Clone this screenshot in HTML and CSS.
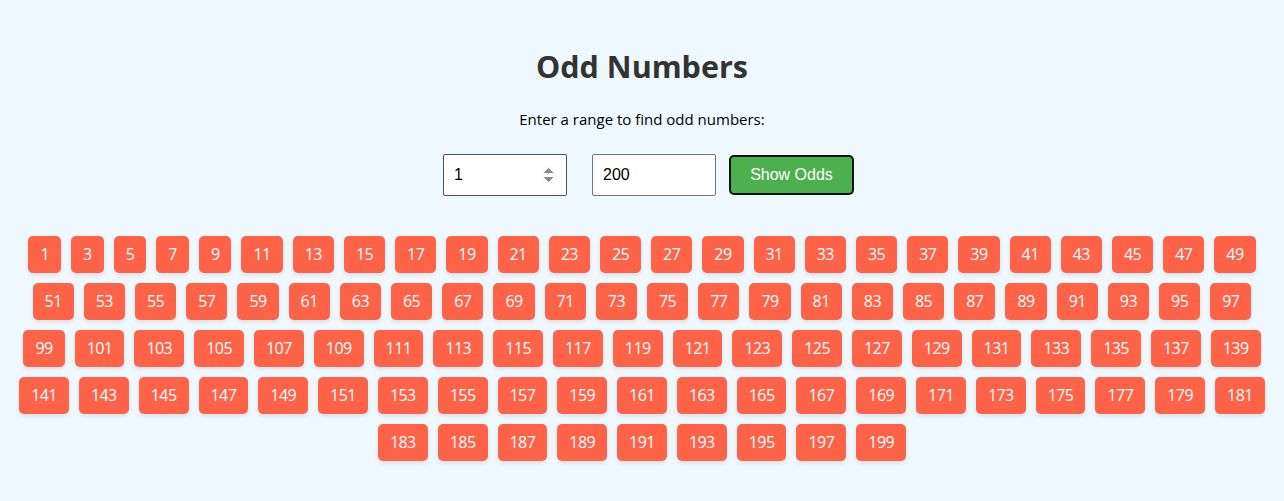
FILE: index.html
```html
<!DOCTYPE html>
<html lang="en">
<head>
<meta charset="utf-8">
<title>Odd Numbers</title>
<link rel="stylesheet" href="styles.css">
</head>
<body>
<main class="page">
  <h1 class="title">Odd Numbers</h1>
  <p class="subtitle">Enter a range to find odd numbers:</p>
  <div class="controls">
    <input class="field field-start" type="number" value="1">
    <input class="field field-end" type="number" value="200">
    <button class="btn" type="button">Show Odds</button>
  </div>
  <div class="numbers">
    <span class="num">1</span><span class="num">3</span><span class="num">5</span><span class="num">7</span><span class="num">9</span>
    <span class="num">11</span><span class="num">13</span><span class="num">15</span><span class="num">17</span><span class="num">19</span>
    <span class="num">21</span><span class="num">23</span><span class="num">25</span><span class="num">27</span><span class="num">29</span>
    <span class="num">31</span><span class="num">33</span><span class="num">35</span><span class="num">37</span><span class="num">39</span>
    <span class="num">41</span><span class="num">43</span><span class="num">45</span><span class="num">47</span><span class="num">49</span>
    <span class="num">51</span><span class="num">53</span><span class="num">55</span><span class="num">57</span><span class="num">59</span>
    <span class="num">61</span><span class="num">63</span><span class="num">65</span><span class="num">67</span><span class="num">69</span>
    <span class="num">71</span><span class="num">73</span><span class="num">75</span><span class="num">77</span><span class="num">79</span>
    <span class="num">81</span><span class="num">83</span><span class="num">85</span><span class="num">87</span><span class="num">89</span>
    <span class="num">91</span><span class="num">93</span><span class="num">95</span><span class="num">97</span><span class="num">99</span>
    <span class="num">101</span><span class="num">103</span><span class="num">105</span><span class="num">107</span><span class="num">109</span>
    <span class="num">111</span><span class="num">113</span><span class="num">115</span><span class="num">117</span><span class="num">119</span>
    <span class="num">121</span><span class="num">123</span><span class="num">125</span><span class="num">127</span><span class="num">129</span>
    <span class="num">131</span><span class="num">133</span><span class="num">135</span><span class="num">137</span><span class="num">139</span>
    <span class="num">141</span><span class="num">143</span><span class="num">145</span><span class="num">147</span><span class="num">149</span>
    <span class="num">151</span><span class="num">153</span><span class="num">155</span><span class="num">157</span><span class="num">159</span>
    <span class="num">161</span><span class="num">163</span><span class="num">165</span><span class="num">167</span><span class="num">169</span>
    <span class="num">171</span><span class="num">173</span><span class="num">175</span><span class="num">177</span><span class="num">179</span>
    <span class="num">181</span><span class="num">183</span><span class="num">185</span><span class="num">187</span><span class="num">189</span>
    <span class="num">191</span><span class="num">193</span><span class="num">195</span><span class="num">197</span><span class="num">199</span>
  </div>
</main>
</body>
</html>
```

FILE: styles.css
```css
html, body {
  margin: 0;
  padding: 0;
  background: #f0f8ff;
}

body {
  font-family: "Open Sans", "Noto Sans", sans-serif;
  color: #000;
}

.page {
  padding: 45px 8px 20px;
  display: flex;
  flex-direction: column;
  align-items: center;
}

.title {
  margin: 0;
  font-size: 30.5px;
  line-height: 42px;
  font-weight: 700;
  color: #333;
}

.subtitle {
  margin: 21px 0 0;
  font-size: 15px;
  line-height: 22px;
}

.controls {
  margin-top: 24px;
  padding-left: 13px;
  display: flex;
  align-items: center;
}

.field {
  box-sizing: border-box;
  width: 124px;
  height: 42px;
  padding: 10px;
  font-family: "Liberation Sans", Arial, sans-serif;
  font-size: 16px;
  color: #000;
  background: #fff;
  border: 1px solid #767676;
  border-radius: 2px;
  margin: 0;
}

.field-start {
  border-color: #4f4f4f;
  margin-right: 25px;
}

.field-start::-webkit-inner-spin-button {
  opacity: 1;
}

.field-end {
  margin-right: 13px;
}

.field-end::-webkit-inner-spin-button,
.field-end::-webkit-outer-spin-button {
  -webkit-appearance: none;
  margin: 0;
}

.btn {
  box-sizing: border-box;
  width: 125px;
  height: 40px;
  padding: 0;
  white-space: nowrap;
  font-family: "Liberation Sans", Arial, sans-serif;
  font-size: 16px;
  color: #fff;
  background: #4caf50;
  border: 2px solid #111;
  border-radius: 5px;
}

.numbers {
  margin-top: 35px;
  width: 100%;
  display: flex;
  flex-wrap: wrap;
  justify-content: center;
}

.num {
  margin: 5px;
  padding: 8px 12px;
  font-size: 16px;
  line-height: 21px;
  letter-spacing: -0.55px;
  color: #fff;
  background: #ff6347;
  border-radius: 5px;
  box-shadow: 0 2px 4px rgba(0, 0, 0, 0.1);
}
```
